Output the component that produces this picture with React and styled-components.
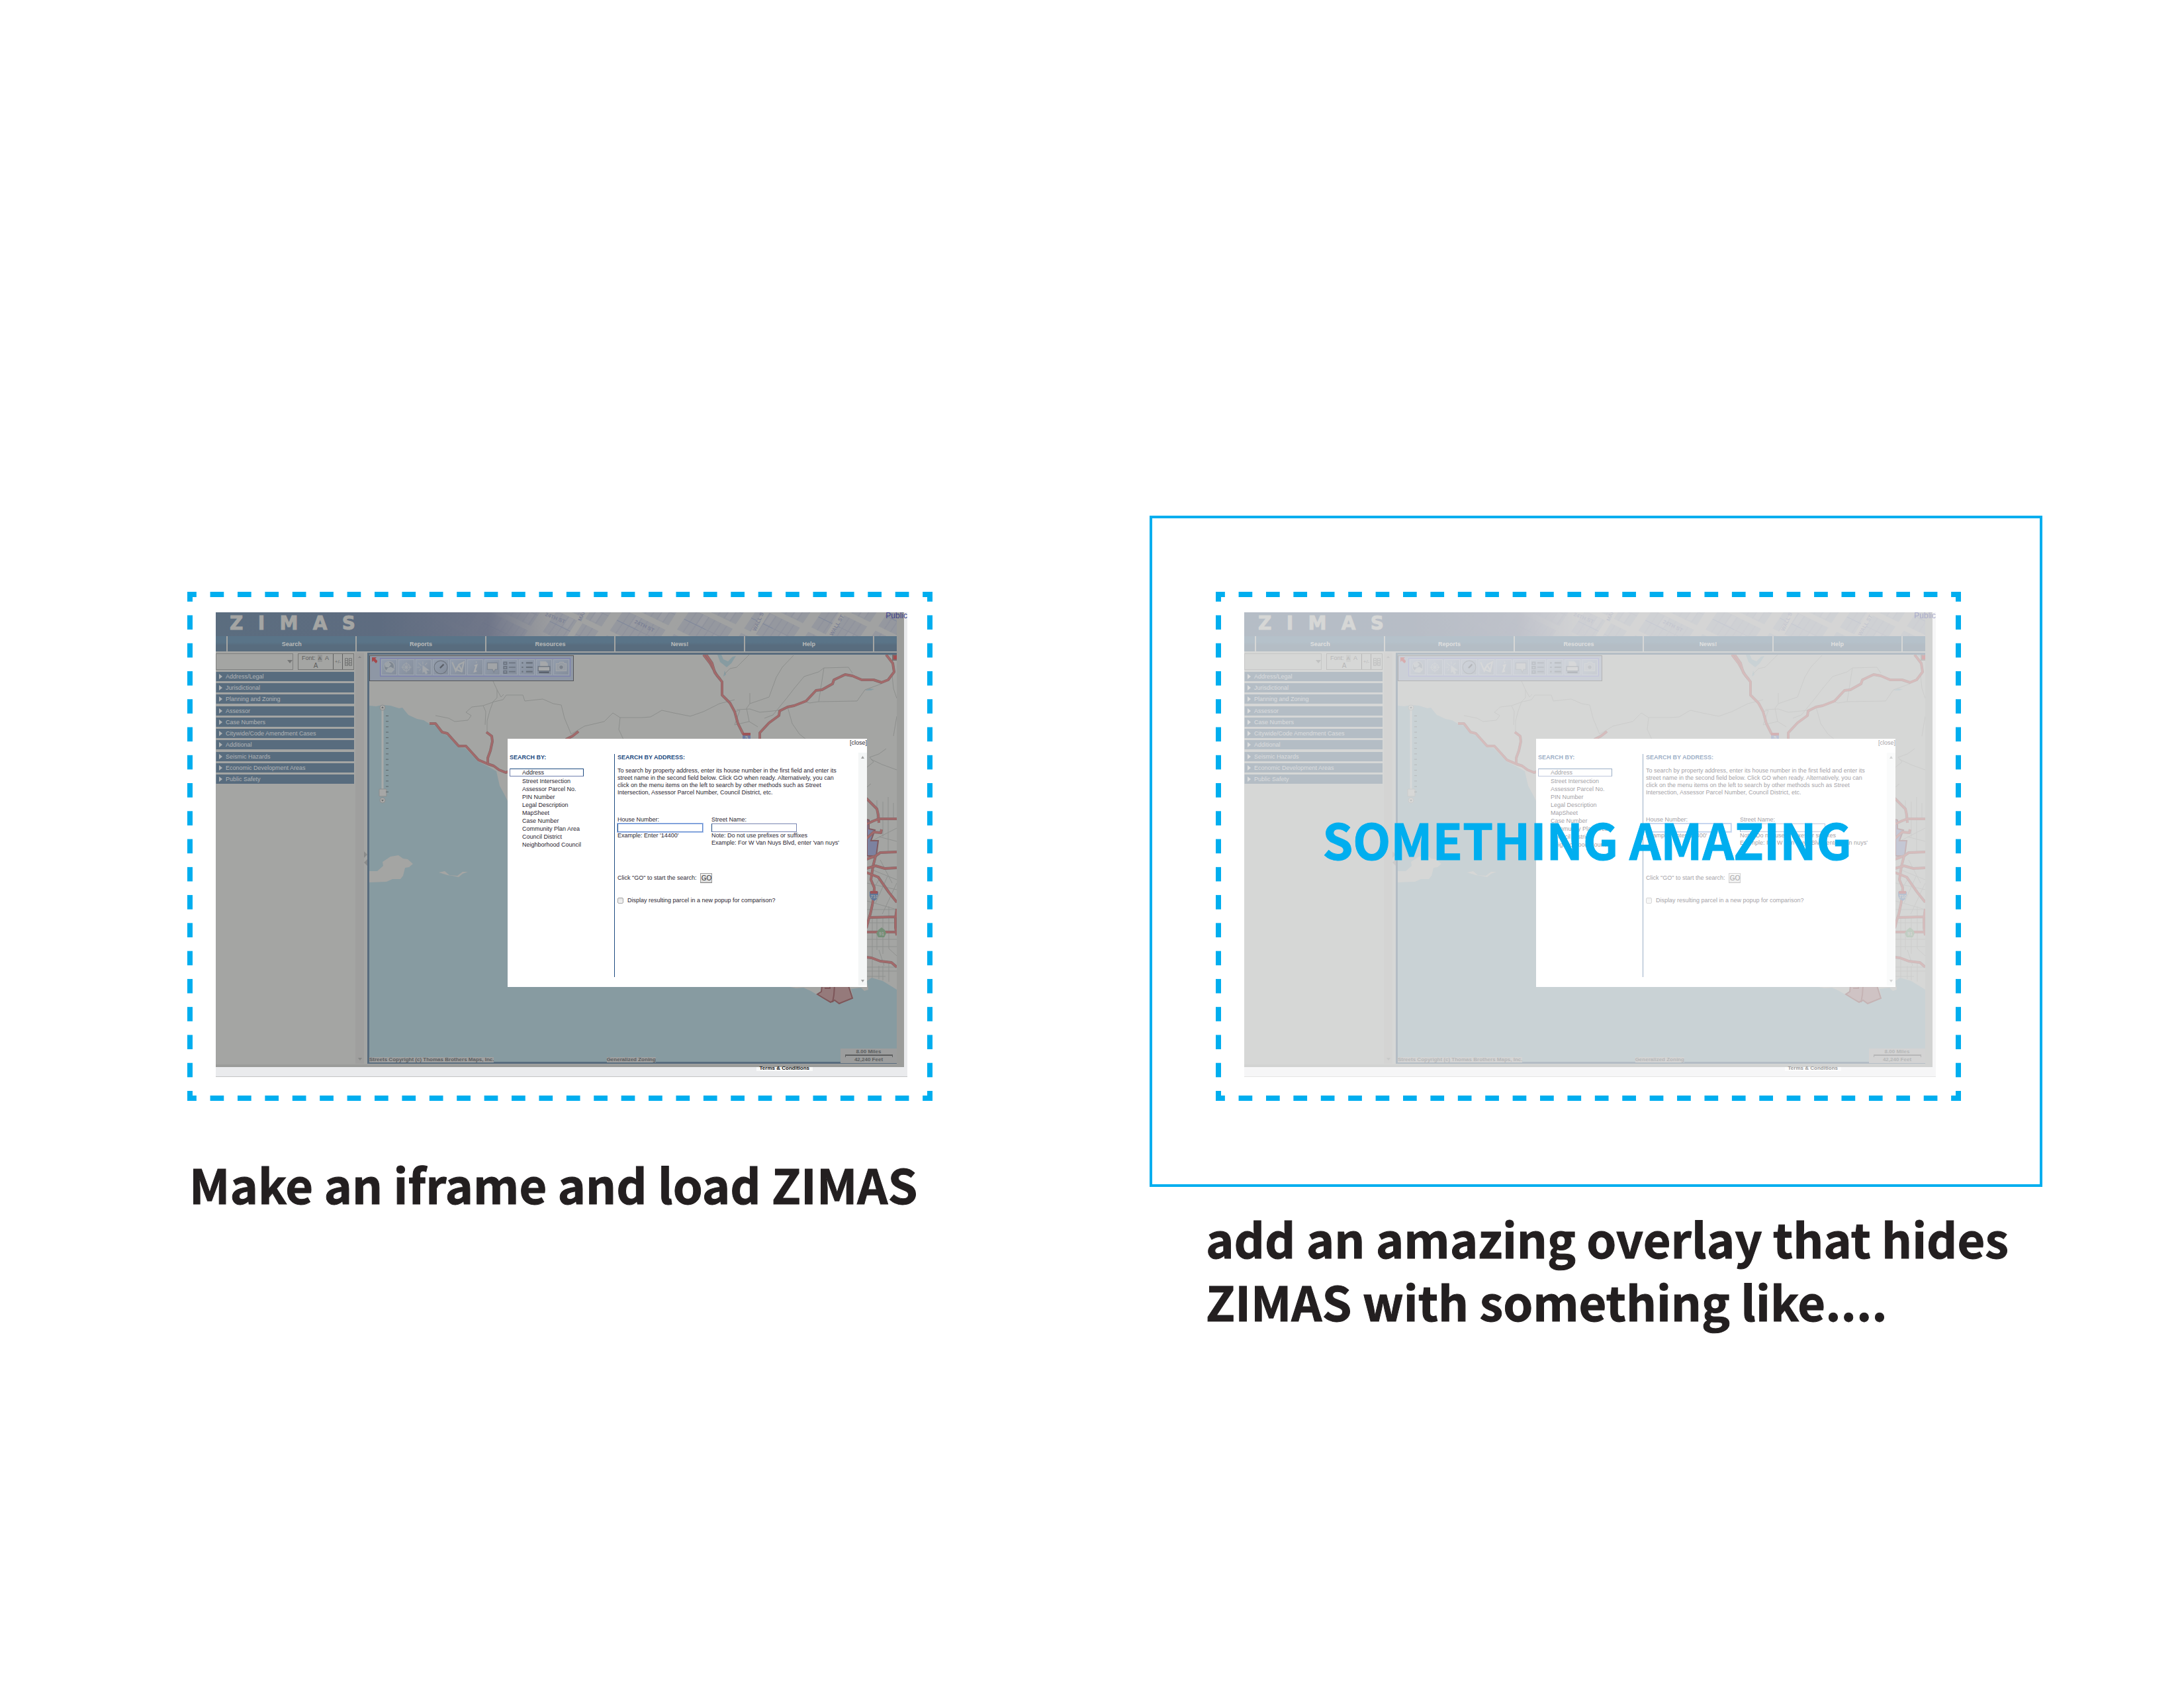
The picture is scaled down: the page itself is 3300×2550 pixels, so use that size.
import React, { useId } from "react";
import styled, { createGlobalStyle } from "styled-components";

const CYAN = "#00aeef";
const SLATE = "#586c7e";
const STONE = "#a4a5a3";

const GlobalStyle = createGlobalStyle`
  *, *::before, *::after { box-sizing: border-box; }
  body {
    margin: 0;
    background: #fff;
    color: #231f20;
    font-family: "Liberation Sans", Arial, sans-serif;
  }
  button, input, select { font: inherit; margin: 0; }
`;

/* ---------- page ---------- */

const Page = styled.main`
  display: grid;
  grid-template-columns: minmax(0, 1126fr) minmax(0, 1349fr);
  column-gap: 328px;
  align-items: start;
  min-height: 100vh;
  padding: 779px 214px 100px 283px;
`;

const Panel = styled.section`
  padding-top: ${(p) => p.$drop || 0}px;
`;

const Caption = styled.h2`
  margin: ${(p) => p.$gap}px 0 0 ${(p) => p.$indent}px;
  font-family: "Noto Sans CJK SC", "Noto Sans", sans-serif;
  font-size: 72px;
  font-weight: 700;
  line-height: 95px;
  white-space: nowrap;
  -webkit-text-stroke: 1px currentColor;
`;

const OuterBox = styled.div`
  border: 4px solid ${CYAN};
  padding: 111px 119px 126px 96px;
`;

const hDash = `linear-gradient(90deg, ${CYAN} 25%, transparent 25% 75%, ${CYAN} 75%)`;
const vDash = `linear-gradient(${CYAN} 25%, transparent 25% 75%, ${CYAN} 75%)`;

const DashedFrame = styled.div`
  position: relative;
  border: 4px solid transparent;
  padding: 27px 34px 32px 39px;
  background-image: ${hDash}, ${hDash}, ${vDash}, ${vDash};
  background-size: 41px 8px, 41px 8px, 8px 42px, 8px 42px;
  background-position: left 0 top -4px, left 0 bottom -4px, left -4px top 0, right -4px top 0;
  background-repeat: round no-repeat, round no-repeat, no-repeat round, no-repeat round;
  background-origin: padding-box;
  background-clip: border-box;
`;

const Overlay = styled.div`
  position: absolute;
  inset: 0;
  display: flex;
  align-items: center;
  justify-content: center;
  padding: 0 4px 24px 0;
  color: ${CYAN};
  font-family: "Noto Sans CJK SC", "Noto Sans", sans-serif;
  font-size: 74px;
  font-weight: 700;
  line-height: 95px;
  white-space: nowrap;
  -webkit-text-stroke: 1px currentColor;
`;

/* ---------- embedded site ---------- */

const Screen = styled.div`
  position: relative;
  background: #eaebed;
  border-bottom: 1px solid #c4c4c4;
  padding-right: 5px;
  opacity: ${(p) => (p.$faded ? 0.45 : 1)};
`;

const Site = styled.div`
  position: relative;
  background: ${STONE};
  border-right: 11px solid #9b9c9a;
  border-bottom: 4px solid #9b9c9a;
`;

const Header = styled.header`
  display: grid;
  height: 36px;
  overflow: hidden;
  > * { grid-area: 1 / 1; }
`;

const HeaderArt = styled.svg`
  display: block;
  width: 100%;
  height: 36px;
`;

const Logo = styled.div`
  display: flex;
  justify-content: space-between;
  align-items: center;
  width: 190px;
  height: 34px;
  margin-left: 21px;
  color: ${STONE};
  font: 700 28px/34px "DejaVu Sans", sans-serif;
  -webkit-text-stroke: 1px currentColor;
`;

const UserLink = styled.a`
  position: absolute;
  top: 0;
  right: 0;
  color: #3f4289;
  font-size: 12px;
  line-height: 11px;
  text-decoration: none;
`;

const Nav = styled.nav`
  display: grid;
  grid-template-columns: 16px repeat(5, minmax(0, 1fr)) 34px;
  column-gap: 2px;
  height: 23px;
`;

const NavCell = styled.button`
  border: 0;
  padding: 0;
  background: linear-gradient(#5a7488 0 40%, ${SLATE} 60%);
  color: #b9bbba;
  font-size: 9px;
  font-weight: 700;
`;

const NavEnd = styled.span`
  background: linear-gradient(#5a7488 0 40%, ${SLATE} 60%);
`;

const Main = styled.div`
  display: flex;
  height: 624px;
  padding: 2px 0 1px;
`;

const Sidebar = styled.div`
  display: flex;
  flex-direction: column;
  gap: 3px;
  width: 209px;
  padding-top: 1px;
`;

const Tools = styled.div`
  display: flex;
  justify-content: space-between;
  height: 25px;
`;

const SelectWrap = styled.label`
  display: grid;
  width: 117px;
  align-items: center;
  > * { grid-area: 1 / 1; }
  svg { justify-self: end; margin-right: 1px; pointer-events: none; }
`;

const Select = styled.select`
  appearance: none;
  width: 100%;
  height: 25px;
  border: 1px solid #7f807f;
  border-radius: 0;
  background: ${STONE};
`;

const FontBox = styled.div`
  display: grid;
  grid-template-columns: 1fr 14px 17px;
  width: 85px;
  border: 1px solid #747574;
`;

const FontSizes = styled.div`
  display: flex;
  flex-wrap: wrap;
  justify-content: center;
  align-content: center;
  column-gap: 3px;
  color: #5d5e5e;
  font-size: 9px;
  line-height: 11px;
`;

const SizeButton = styled.button`
  border: 0;
  padding: 0 1px;
  background: ${(p) => (p.$on ? "#959695" : "transparent")};
  color: inherit;
  font-size: ${(p) => p.$size}px;
  line-height: 11px;
`;

const SmallButton = styled.button`
  display: grid;
  place-items: center;
  border: 0;
  border-left: 1px solid #5e5f5f;
  padding: 0;
  background: transparent;
  color: #696a6a;
  font-size: 8px;
`;

const Sections = styled.div`
  display: flex;
  flex-direction: column;
  justify-content: space-between;
  height: 169px;
`;

const SectionRow = styled.button`
  display: flex;
  align-items: center;
  gap: 5px;
  height: 14px;
  border: 0;
  border-left: 1px solid #7b8894;
  padding: 0 0 0 4px;
  background: ${SLATE};
  color: #b2b5b6;
  font-size: 9px;
  line-height: 14px;
  text-align: left;
`;

const ScrollTrack = styled.div`
  display: flex;
  flex-direction: column;
  justify-content: space-between;
  align-items: center;
  width: 13px;
  padding: 5px 0;
  margin-left: ${(p) => p.$offset || 0}px;
  background: ${(p) => p.$color};
`;

const Splitter = styled.div`
  display: flex;
  flex-direction: column;
  justify-content: center;
  gap: 2px;
  width: 5px;
`;

const MapFrame = styled.div`
  position: relative;
  flex: 1;
  min-width: 0;
  border: 3px solid ${SLATE};
  border-right: 0;
`;

const MapArt = styled.svg`
  display: block;
  width: 100%;
  height: 100%;
`;

const MapToolbar = styled.div`
  position: absolute;
  top: 1px;
  left: 0;
  display: flex;
  width: 309px;
  height: 39px;
  padding: 1px 4px 7px 2px;
  border: 1px solid #555659;
  background: #8e97a5;
`;

const ToolGroup = styled.div`
  display: grid;
  grid-template-columns: repeat(11, 1fr);
  flex: 1;
  margin: 2px 0 0 4px;
  border: 1px solid #797cb0;
  height: 28px;
`;

const ToolButton = styled.button`
  display: grid;
  place-items: center;
  margin: 1px;
  border: 1px solid #9ca4b0;
  padding: 0;
  background: linear-gradient(135deg, #929cab, #858e9c);
`;

const MapNote = styled.span`
  position: absolute;
  bottom: -1px;
  left: ${(p) => p.$left};
  background: #9fa0a0;
  color: #5b5d5f;
  font-size: 8px;
  font-weight: 700;
  line-height: 8px;
  white-space: nowrap;
`;

const ScaleBox = styled.div`
  position: absolute;
  right: 0;
  bottom: -2px;
  display: grid;
  justify-items: center;
  width: 85px;
  padding: 1px 0;
  background: #9c9d9d;
  color: #5b5d5f;
  font-size: 8px;
  font-weight: 700;
  line-height: 8px;
`;

const ScaleBar = styled.span`
  width: 72px;
  height: 4px;
  border: 1px solid #5c5d5e;
  border-top-width: 2px;
  border-bottom: 0;
`;

const Footer = styled.footer`
  display: flex;
  justify-content: flex-end;
  height: 14px;
`;

const Terms = styled.a`
  position: relative;
  height: 9px;
  margin: -3px 138px 0 0;
  padding: 0 5px;
  background: linear-gradient(transparent 3px, #f8f9f9 3px);
  color: #111;
  font-size: 8px;
  font-weight: 700;
  line-height: 9px;
  text-decoration: none;
`;

/* ---------- search dialog ---------- */

const Dialog = styled.form`
  position: absolute;
  top: 191px;
  left: 441px;
  display: grid;
  grid-template-rows: 12px 1fr;
  row-gap: 9px;
  width: 543px;
  height: 375px;
  padding-bottom: 2px;
  background: #fff;
  color: #2a2430;
  font-size: 9px;
  line-height: 11px;
`;

const CloseButton = styled.button`
  justify-self: end;
  border: 0;
  padding: 0;
  background: transparent;
  color: inherit;
  line-height: 12px;
`;

const DialogBody = styled.div`
  display: grid;
  grid-template-columns: 161px 1fr 13px;
`;

const SearchMenu = styled.nav`
  padding: 2px 0 0 3px;
`;

const SearchPane = styled.div`
  margin: 2px 0 13px;
  border-left: 1px solid #1d4a80;
  padding-left: 4px;
`;

const Title = styled.h3`
  margin: 0;
  color: #1d4a80;
  font-size: 9px;
  line-height: 11px;
`;

const MenuList = styled.ul`
  margin: 11px 0 0;
  padding: 0;
  list-style: none;
`;

const MenuItem = styled.li`
  width: 112px;
  margin-bottom: ${(p) => (p.$on ? 1 : 0)}px;
  border: 1px solid ${(p) => (p.$on ? "#6f7fae" : "transparent")};
  border-top-color: ${(p) => (p.$on ? "#1d4a80" : "transparent")};
  border-right-color: ${(p) => (p.$on ? "#1d4a80" : "transparent")};
  padding-left: 18px;
  line-height: 10px;
  white-space: nowrap;
`;

const MenuLink = styled.a`
  color: inherit;
  text-decoration: none;
`;

const Intro = styled.p`
  width: 340px;
  margin: 9px 0 30px;
`;

const Fields = styled.div`
  display: grid;
  grid-template-columns: 129px 1fr;
  column-gap: 13px;
  height: 46px;
`;

const Field = styled.div`
  display: flex;
  flex-direction: column;
`;

const TextBox = styled.input`
  width: 129px;
  height: 13px;
  border: 1px solid ${(p) => (p.$focus ? "#5f86cc" : "#7784b2")};
  border-left-color: #1d4a80;
  padding: 0 2px;
  outline: 0;
  background: #fff;
  box-shadow: ${(p) => (p.$focus ? "0 0 0 1px #a9c3ee" : "none")};
`;

const GoRow = styled.div`
  display: flex;
  align-items: center;
  gap: 6px;
  height: 15px;
  margin-top: 40px;
`;

const GoButton = styled.button`
  width: 18px;
  height: 15px;
  border: 1px solid #9b9b9b;
  border-bottom-color: #7d7d7d;
  padding: 0;
  background: linear-gradient(#f2f2f2, #dadada);
  color: #333;
  font-size: 10px;
  line-height: 13px;
`;

const CheckRow = styled.label`
  display: flex;
  align-items: center;
  gap: 6px;
  margin-top: 21px;
`;

const Check = styled.input`
  appearance: none;
  width: 9px;
  height: 9px;
  border: 1px solid #a5a5a5;
  border-radius: 2px;
  background: linear-gradient(#e4e4e4, #f4f4f4);
`;

/* ---------- drawings ---------- */

function Arrow({ dir, color = "#7f807f", w = 6, h = 4 }) {
  const d = {
    up: `M0 ${h}H${w}L${w / 2} 0Z`,
    down: `M0 0H${w}L${w / 2} ${h}Z`,
    right: `M0 0V${h}L${w} ${h / 2}Z`,
    left: `M${w} 0V${h}L0 ${h / 2}Z`,
  }[dir];
  return (
    <svg width={w} height={h} aria-hidden="true">
      <path d={d} fill={color} />
    </svg>
  );
}

function StreetBanner() {
  const id = useId();
  return (
    <HeaderArt viewBox="0 0 1029 36" preserveAspectRatio="none" aria-hidden="true">
      <defs>
        <pattern id={`${id}p`} width="84" height="46" patternUnits="userSpaceOnUse" patternTransform="translate(8 6) rotate(26) skewX(-8)">
          <rect width="84" height="46" fill="#a1a2a2" />
          <rect width="70" height="38" fill="#95989f" />
          <path d="M0 19H70M10 0V38M20 0V38M30 0V38M40 0V38M50 0V38M60 0V38" stroke="#8b8f9b" strokeWidth="1" />
          <path d="M21 1h8v16h-8zM51 20h8v16h-8z" fill="#9a9ca2" />
          <path d="M0 19H36" stroke="#7e869a" strokeWidth="1" />
        </pattern>
        <linearGradient id={`${id}g`}>
          <stop offset="0" stopColor="#5b6d7f" />
          <stop offset="0.24" stopColor="#5e6c80" />
          <stop offset="0.4" stopColor="#6b7286" stopOpacity="0.9" />
          <stop offset="0.52" stopColor="#8a8c98" stopOpacity="0" />
        </linearGradient>
      </defs>
      <rect width="1029" height="36" fill={`url(#${id}p)`} />
      <path d="M470 38L498 -4M535 38L562 -4M678 38L704 -4M808 38L834 -4M924 38L950 -4" stroke="#a1a2a2" strokeWidth="9" />
      <g fill="#7c8195" fontFamily="Liberation Sans" fontSize="8" fontWeight="700">
        <text transform="translate(497 5) rotate(22)">24TH ST</text>
        <text transform="translate(552 14) rotate(-65)">MAPLE</text>
        <text transform="translate(632 16) rotate(26)">24TH ST</text>
        <text transform="translate(816 29) rotate(-66)">WALL ST</text>
        <text transform="translate(932 36) rotate(-60)">WALL ST</text>
      </g>
      <rect width="1029" height="36" fill={`url(#${id}g)`} />
    </HeaderArt>
  );
}

const HIGHWAYS = [
  "M91 104L100 104L110 117L118 119L135 138L146 138L165 159L179 165L188 168L196 174L206 178L212 176",
  "M177 117L185 123L186 131L183 145L179 156V165",
  "M316 116L307 123L297 128",
  "M505 0L515 13L525 31L533 41V61L545 73L552 86L557 104L565 120",
  "M509 0L518 13L522 27L530 37",
  "M781 0L791 13L793 26L784 38L774 42L762 38H744L730 32L719 30L702 38L700 44L684 53L675 54L660 70L642 77L632 79L620 85L619 92L604 103L590 118V130",
  "M751 217L767 233L769 242L770 254",
  "M751 256L762 251L770 248H797",
  "M751 278L762 268L773 269L774 264",
  "M751 309L765 304L772 299L797 298",
  "M765 304L761 320L758 340L763 352V362L760 378L757 392L755 398L751 413",
  "M751 323L765 319L779 323L797 322",
  "M751 329L769 336L785 359L797 374",
  "M755 397L797 396M797 384L795 398V412L797 424",
  "M751 419H797",
  "M751 457L759 458L772 463L789 465L797 472",
];

const LOCAL_ROADS =
  "M187 40L193 53V65L187 71L182 85L178 100V116 M193 53L199 64L203 60 M172 77L176 86L175 106 " +
  "M100 92L120 96L129 101L149 99L154 92L146 87L155 79L172 77L189 71L202 68L207 61H232L235 70L262 67L278 74L290 76L295 96L300 108L305 120L325 108L355 101L368 88L379 95H412L425 94L442 84L460 88L485 93L505 86L529 74L552 68 " +
  "M379 95L377 113L384 128 M574 0L555 19L545 21L537 29 M641 1L624 19L615 34L604 64L575 74L570 81L574 101L587 109 M575 58V74 " +
  "M730 28L724 19L687 20L679 26L657 33L642 51L632 64L610 91L597 96 M687 20L679 71L665 73L656 70 M679 71L737 70L749 53L774 44 " +
  "M555 83L575 82L590 87L620 84 M552 86L560 84L552 106L574 101 M632 79L639 104L650 120L660 128 M790 31L792 51L797 66 M797 93L792 123 " +
  "M752 170L762 162L756 155L770 150L781 142 M758 158L775 166L797 174 M752 200L758 195";

const CITY_GRID =
  "M767 220V250M776 222V275M792 224V248M784 215V300M752 285L797 262M770 275L797 282M772 310L790 345M760 325L797 340M752 345L797 355M770 340L757 362M783 335L765 375M797 345L775 392M752 372L797 385M752 385H797M767 395V446M776 398V452M785 380V444M752 405H797M752 430H797M752 441H797M760 398V470M770 446L778 470M785 444L797 455M752 472H797M752 478H797M752 486H780M760 470V488M770 470V490M785 465V494M776 470V492";

function RegionMap() {
  return (
    <MapArt viewBox="0 0 797 615" preserveAspectRatio="none" role="img" aria-label="Map of Los Angeles">
      <rect width="797" height="615" fill={STONE} />
      <path
        fill="#879ba1"
        d="M0 77L10 78L20 76L32 77L45 81L50 80L59 91L72 97L82 99L92 105L100 107L109 119L118 122L134 140L145 141L164 161L178 168L192 176L197 198L204 211L209 221L260 340L420 420L600 490L636 502L645 504L656 503L667 508L677 514L697 526L703 523L710 528L731 519L728 505L743 503L748 508L754 506L752 493L759 488L776 493L797 506V615H0Z"
      />
      <path
        fill={STONE}
        d="M0 327H12L21 319L20 313L32 305L44 303L51 308L58 309L66 316L60 321L54 322L51 334L47 339H35L26 343L0 344ZM105 329L114 327L121 333L133 334L141 328L149 328L141 331L135 336L125 334L118 333Z"
      />
      <path fill="#879ba1" d="M526 0L530 11L540 19L547 13L554 2L549 3L542 10L535 7L532 0ZM535 33L537 24L539 30ZM749 54L756 51L763 52L758 54ZM784 0H790L789 3Z" />
      <path fill="none" stroke="#8d8f8d" strokeWidth="1" d={LOCAL_ROADS} />
      <path fill="none" stroke="#8f918f" strokeWidth="1" d={CITY_GRID} />
      <path d="M752 249L755 250L755 263L764 265L758 281L769 281L766 304L752 304Z" fill="#7c82a0" stroke="#805a60" strokeWidth="2" />
      {HIGHWAYS.map((d) => (
        <g key={d} fill="none" strokeLinejoin="round">
          <path d={d} stroke="#7a6a6b" strokeWidth="4" />
          <path d={d} stroke="#a3696a" strokeWidth="3" />
        </g>
      ))}
      <path d="M684 500L683 509L677 513L685 518L697 525L703 522L710 527L730 519L724 500Z" fill="#957a7b" stroke="#7d5659" strokeWidth="2" />
      <path d="M703 500L702 514L700 525M688 504H696V498" fill="none" stroke="#7d5659" strokeWidth="2" />
      <g fill="#a4a5a3" fontFamily="Liberation Sans" fontSize="8" fontWeight="700" textAnchor="middle">
        <path d="M564 120H576V128H564Z" fill="#6c7aa0" />
        <path d="M564 118H576V122H564Z" fill="#9d5457" />
        <text x="570" y="128">5</text>
        <path d="M756 358H769V364L767 369L763 372L758 369L756 364Z" fill="#5f7698" />
        <path d="M757 357H768V361H757Z" fill="#9d5457" />
        <text x="763" y="368" fontSize="7">710</text>
        <path d="M774 412L779 416L781 421L778 427H769L766 421L769 416Z" fill="#748f77" />
        <text x="774" y="424" fontSize="7">91</text>
      </g>
      <path d="M790 -3H797V9H790Z" fill="#77706f" />
      <path d="M792 0L794 2L797 0V7H792Z" fill="#a54b4e" />
      <g stroke="#8b8d8d">
        <path d="M20 84V203" stroke="#a9aaa9" strokeWidth="3" />
        <circle cx="20" cy="80" r="4" fill="#a9aaa9" />
        <circle cx="20" cy="220" r="4" fill="#a9aaa9" />
        <rect x="15" y="203" width="11" height="11" rx="1" fill="#a6a7a6" />
      </g>
      <path d="M18 81H22L20 78ZM18 219H22L20 222Z" fill="#6d6f6f" />
      {Array.from({ length: 15 }, (_, i) => (
        <path key={i} d={`M25 ${92.5 + i * 8.2}h4`} stroke="#5c6568" strokeWidth="1" />
      ))}
    </MapArt>
  );
}

const TOOL_ICONS = [
  ["Full extent", <><circle cx="10" cy="9" r="7" fill="#7e8791" /><path d="M5 5l4-2 3 3-3 4-4-1zM8 12l4-2 5 3-4 4-7-1z" fill="#9ca3a8" /></>],
  ["Pan", <><circle cx="10" cy="10" r="5" /><path d="M10 3v14M3 10h14M7 7l6 6M13 7l-6 6" /></>],
  ["Select", <><path d="M9 2v4M3 4l4 4M1 10h4M15 4l-3 3M4 15l2-3" /><path d="M9 8l8 6-4 0 2 4-2 1-2-4-2 2z" fill="#a3a6aa" /></>],
  ["Radius", <><circle cx="10" cy="10" r="9" stroke="#6f7680" /><path d="M9 11l5-5" stroke="#5a5f67" strokeWidth="2" /></>],
  ["Measure", <path d="M2 3l5 12 4-8 5 9M12 6l6-3-3 13-8-3z" stroke="#a5a8aa" strokeWidth="2" />],
  ["Identify", <path d="M11 3l1 0M9 8l3-1-3 9 3-1" stroke="#a9abad" strokeWidth="2" />],
  ["Comment", <path d="M3 4h14v9h-3l-2 4-2-4H3z" fill="#a1a4a7" stroke="#7b838f" />],
  ["Checklist", <path d="M2 3h4v3H2zM2 9h4v3H2zM2 15h4v3H2zM9 4h9M9 10h9M9 16h9" stroke="#6c7480" strokeWidth="1.5" />],
  ["Legend", <path d="M3 4h2M3 10h2M3 16h2M9 4h9M9 10h9M9 16h9" stroke="#68707b" strokeWidth="2" />],
  ["Print", <><path d="M5 9V2h7l3 3v4z" fill="#a6a8aa" /><path d="M2 9h16v6H2z" fill="#a6a8aa" stroke="#666e7a" /><path d="M3 17h14" stroke="#565d68" strokeWidth="2" /></>],
  ["Snapshot", <><path d="M3 5h4l1-2h5l1 2h3v10H3z" fill="#979da5" stroke="#a4a7ab" /><circle cx="10" cy="10" r="3" fill="#7b828c" /></>],
];

const SECTIONS = [
  "Address/Legal",
  "Jurisdictional",
  "Planning and Zoning",
  "Assessor",
  "Case Numbers",
  "Citywide/Code Amendment Cases",
  "Additional",
  "Seismic Hazards",
  "Economic Development Areas",
  "Public Safety",
];

const SEARCH_TYPES = [
  "Address",
  "Street Intersection",
  "Assessor Parcel No.",
  "PIN Number",
  "Legal Description",
  "MapSheet",
  "Case Number",
  "Community Plan Area",
  "Council District",
  "Neighborhood Council",
];

function SearchDialog() {
  const id = useId();
  return (
    <Dialog onSubmit={(e) => e.preventDefault()}>
      <CloseButton type="button">[close]</CloseButton>
      <DialogBody>
        <SearchMenu>
          <Title>SEARCH BY:</Title>
          <MenuList>
            {SEARCH_TYPES.map((name, i) => (
              <MenuItem key={name} $on={i === 0}>
                <MenuLink href="#search">{name}</MenuLink>
              </MenuItem>
            ))}
          </MenuList>
        </SearchMenu>
        <SearchPane>
          <Title>SEARCH BY ADDRESS:</Title>
          <Intro>
            To search by property address, enter its house number in the first field and enter its
            <br />
            street name in the second field below. Click GO when ready. Alternatively, you can
            <br />
            click on the menu items on the left to search by other methods such as Street
            <br />
            Intersection, Assessor Parcel Number, Council District, etc.
          </Intro>
          <Fields>
            <Field>
              <label htmlFor={`${id}house`}>House Number:</label>
              <TextBox id={`${id}house`} type="text" $focus />
              <span>Example: Enter '14400'</span>
            </Field>
            <Field>
              <label htmlFor={`${id}street`}>Street Name:</label>
              <TextBox id={`${id}street`} type="text" />
              <span>Note: Do not use prefixes or suffixes</span>
              <span>Example: For W Van Nuys Blvd, enter 'van nuys'</span>
            </Field>
          </Fields>
          <GoRow>
            <span>Click "GO" to start the search:</span>
            <GoButton type="submit">GO</GoButton>
          </GoRow>
          <CheckRow>
            <Check type="checkbox" />
            Display resulting parcel in a new popup for comparison?
          </CheckRow>
        </SearchPane>
        <ScrollTrack $color="#f4f6f6">
          <Arrow dir="up" w={5} color="#a0a1a1" />
          <Arrow dir="down" w={5} color="#a0a1a1" />
        </ScrollTrack>
      </DialogBody>
    </Dialog>
  );
}

function ZimasScreen({ faded }) {
  return (
    <Screen $faded={faded}>
      <Site>
        <Header>
          <StreetBanner />
          <Logo>
            {"ZIMAS".split("").map((c) => (
              <span key={c}>{c}</span>
            ))}
          </Logo>
        </Header>
        <Nav>
          <NavEnd />
          {["Search", "Reports", "Resources", "News!", "Help"].map((name) => (
            <NavCell key={name} type="button">
              {name}
            </NavCell>
          ))}
          <NavEnd />
        </Nav>
        <Main>
          <Sidebar>
            <Tools>
              <SelectWrap>
                <Select aria-label="Layer" />
                <Arrow dir="down" w={8} h={5} color="#757676" />
              </SelectWrap>
              <FontBox>
                <FontSizes>
                  <span>Font:</span>
                  <SizeButton type="button" $size={8} $on>A</SizeButton>
                  <SizeButton type="button" $size={9}>A</SizeButton>
                  <SizeButton type="button" $size={10}>A</SizeButton>
                </FontSizes>
                <SmallButton type="button">+/-</SmallButton>
                <SmallButton type="button" aria-label="Compare">
                  <svg width="13" height="14" fill="none" stroke="#737474">
                    <path d="M1.500 1.500h4v11h-4zM7.500 1.500h4v11h-4zM2 4.500h4M2 7.500h4M8 4.500h4M8 7.500h4M2 10h9" />
                  </svg>
                </SmallButton>
              </FontBox>
            </Tools>
            <Sections>
              {SECTIONS.map((name) => (
                <SectionRow key={name} type="button">
                  <Arrow dir="right" w={5} h={8} color="#aeb1b2" />
                  {name}
                </SectionRow>
              ))}
            </Sections>
          </Sidebar>
          <ScrollTrack $color="#9f9f9e" $offset={2}>
            <Arrow dir="up" w={5} h={3} color="#858685" />
            <Arrow dir="down" color="#858685" />
          </ScrollTrack>
          <Splitter>
            <Arrow dir="right" w={5} h={10} color="#8b8c8b" />
            <Arrow dir="left" w={5} h={10} color="#8b8c8b" />
          </Splitter>
          <MapFrame>
            <RegionMap />
            <MapToolbar>
              <svg width="10" height="10" aria-hidden="true">
                <path d="M1 1h7L6 3l4 4-3 3-4-4-2 2z" fill="#a5484b" />
              </svg>
              <ToolGroup>
                {TOOL_ICONS.map(([name, art]) => (
                  <ToolButton key={name} type="button" aria-label={name}>
                    <svg width="22" height="22" viewBox="0 0 20 20" fill="none" stroke="#a0a5ab">
                      {art}
                    </svg>
                  </ToolButton>
                ))}
              </ToolGroup>
            </MapToolbar>
            <MapNote $left="0">Streets Copyright (c) Thomas Brothers Maps, Inc.</MapNote>
            <MapNote $left="45%">Generalized Zoning</MapNote>
            <ScaleBox>
              <span>8.00 Miles</span>
              <ScaleBar />
              <span>42,240 Feet</span>
            </ScaleBox>
          </MapFrame>
        </Main>
        <SearchDialog />
      </Site>
      <Footer>
        <Terms href="#terms">Terms &amp; Conditions</Terms>
      </Footer>
      <UserLink href="#public">Public</UserLink>
    </Screen>
  );
}

export default function App() {
  return (
    <>
      <GlobalStyle />
      <Page>
        <Panel $drop={115}>
          <DashedFrame>
            <ZimasScreen />
          </DashedFrame>
          <Caption $gap={77} $indent={3}>
            Make an iframe and load ZIMAS
          </Caption>
        </Panel>
        <Panel>
          <OuterBox>
            <DashedFrame>
              <ZimasScreen faded />
              <Overlay>SOMETHING AMAZING</Overlay>
            </DashedFrame>
          </OuterBox>
          <Caption $gap={29} $indent={85}>
            add an amazing overlay that hides
            <br />
            ZIMAS with something like....
          </Caption>
        </Panel>
      </Page>
    </>
  );
}
